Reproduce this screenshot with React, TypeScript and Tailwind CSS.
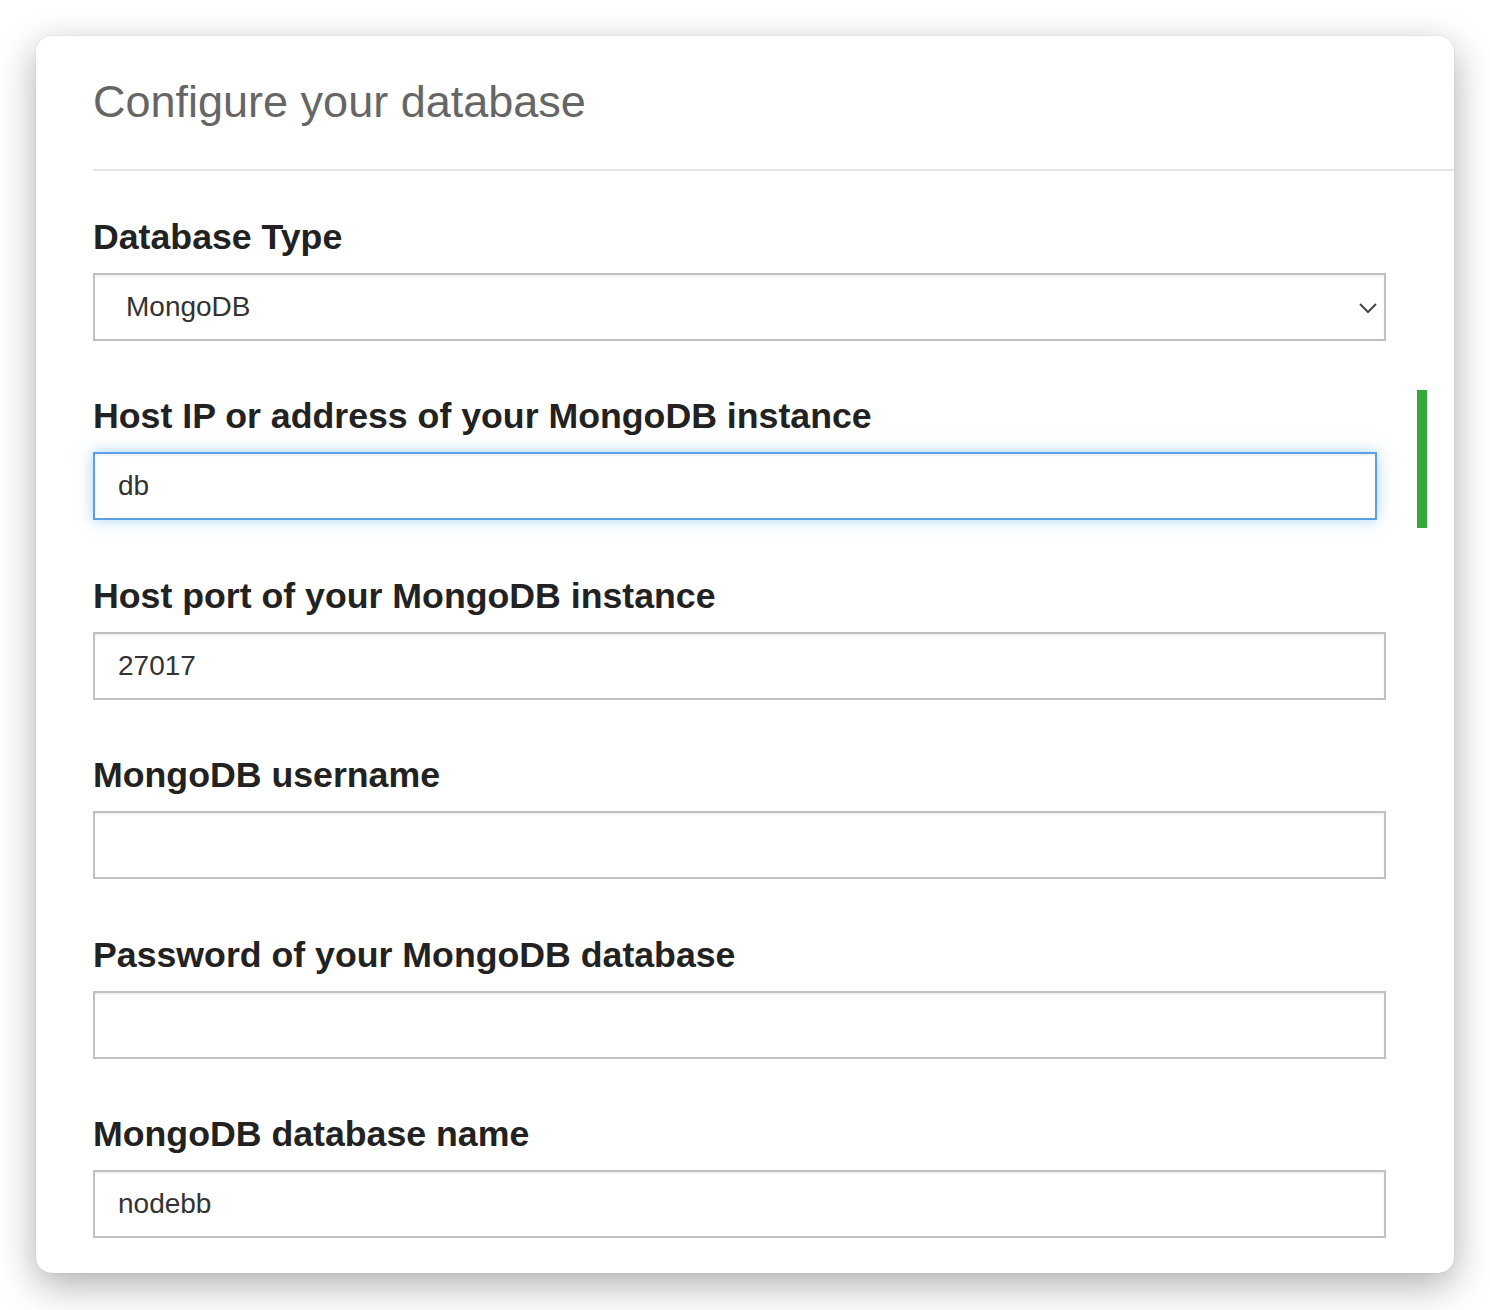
import React from 'react';

const FIELDS: { label: string; value: string; kind: 'select' | 'text' | 'focus' }[] = [
  { label: 'Database Type', value: 'MongoDB', kind: 'select' },
  { label: 'Host IP or address of your MongoDB instance', value: 'db', kind: 'focus' },
  { label: 'Host port of your MongoDB instance', value: '27017', kind: 'text' },
  { label: 'MongoDB username', value: '', kind: 'text' },
  { label: 'Password of your MongoDB database', value: '', kind: 'text' },
  { label: 'MongoDB database name', value: 'nodebb', kind: 'text' },
];

export default function App() {
  return (
    <div className="min-h-screen bg-white p-[36px] font-['Liberation_Sans',Arial,sans-serif]">
      <div className="w-[1418px] rounded-[16px] bg-white pb-[35px] shadow-[0_12px_38px_rgba(0,0,0,0.32),0_0_0_1px_rgba(0,0,0,0.03)]">
        {/* Header */}
        <div className="ml-[57px] border-b-2 border-[#e6e6e6] pt-[41px] pb-[42px]">
          <h1 className="text-[45px] leading-[50px] font-normal text-[#666666]">Configure your database</h1>
        </div>

        {/* Form */}
        <div className="mt-[44px] flex flex-col gap-[53.4px] pl-[57px]">
          {FIELDS.map((f) => (
            <div key={f.label} className="flex items-start">
              <div className="flex w-[1293px] flex-col">
                <label className="mb-[14px] text-[35.7px] leading-[44px] font-bold text-[#222222]">{f.label}</label>
                {f.kind === 'select' && (
                  <div className="relative h-[68px] w-full">
                    <select
                      defaultValue={f.value}
                      className="h-full w-full appearance-none border-2 border-[#c0c0c0] bg-white pl-[31px] text-[28px] text-[#333333] shadow-[inset_0_2px_2px_rgba(0,0,0,0.06)] outline-none"
                    >
                      <option>MongoDB</option>
                      <option>Redis</option>
                      <option>PostgreSQL</option>
                    </select>
                    <svg
                      className="pointer-events-none absolute right-[8px] top-[29px]"
                      width="20"
                      height="12"
                      viewBox="0 0 20 12"
                      fill="none"
                      stroke="#444444"
                      strokeWidth="2"
                    >
                      <polyline points="2,2 10,10 18,2" />
                    </svg>
                  </div>
                )}
                {f.kind === 'text' && (
                  <input
                    defaultValue={f.value}
                    className="h-[68px] w-full border-2 border-[#c0c0c0] bg-white pl-[23px] text-[28px] text-[#333333] shadow-[inset_0_2px_2px_rgba(0,0,0,0.06)] outline-none"
                  />
                )}
                {f.kind === 'focus' && (
                  <input
                    defaultValue={f.value}
                    className="h-[68px] w-[1284px] border-2 border-[#5b9fe4] bg-white pl-[23px] text-[28px] text-[#333333] shadow-[inset_0_2px_2px_rgba(0,0,0,0.06),0_0_14px_rgba(102,175,233,0.55)] outline-none"
                  />
                )}
              </div>
              {f.kind === 'focus' && (
                <div className="ml-[31px] mt-[-4px] mb-[-8px] h-[138px] w-[10px] shrink-0 bg-[#34a83a]" />
              )}
            </div>
          ))}
        </div>
      </div>
    </div>
  );
}
